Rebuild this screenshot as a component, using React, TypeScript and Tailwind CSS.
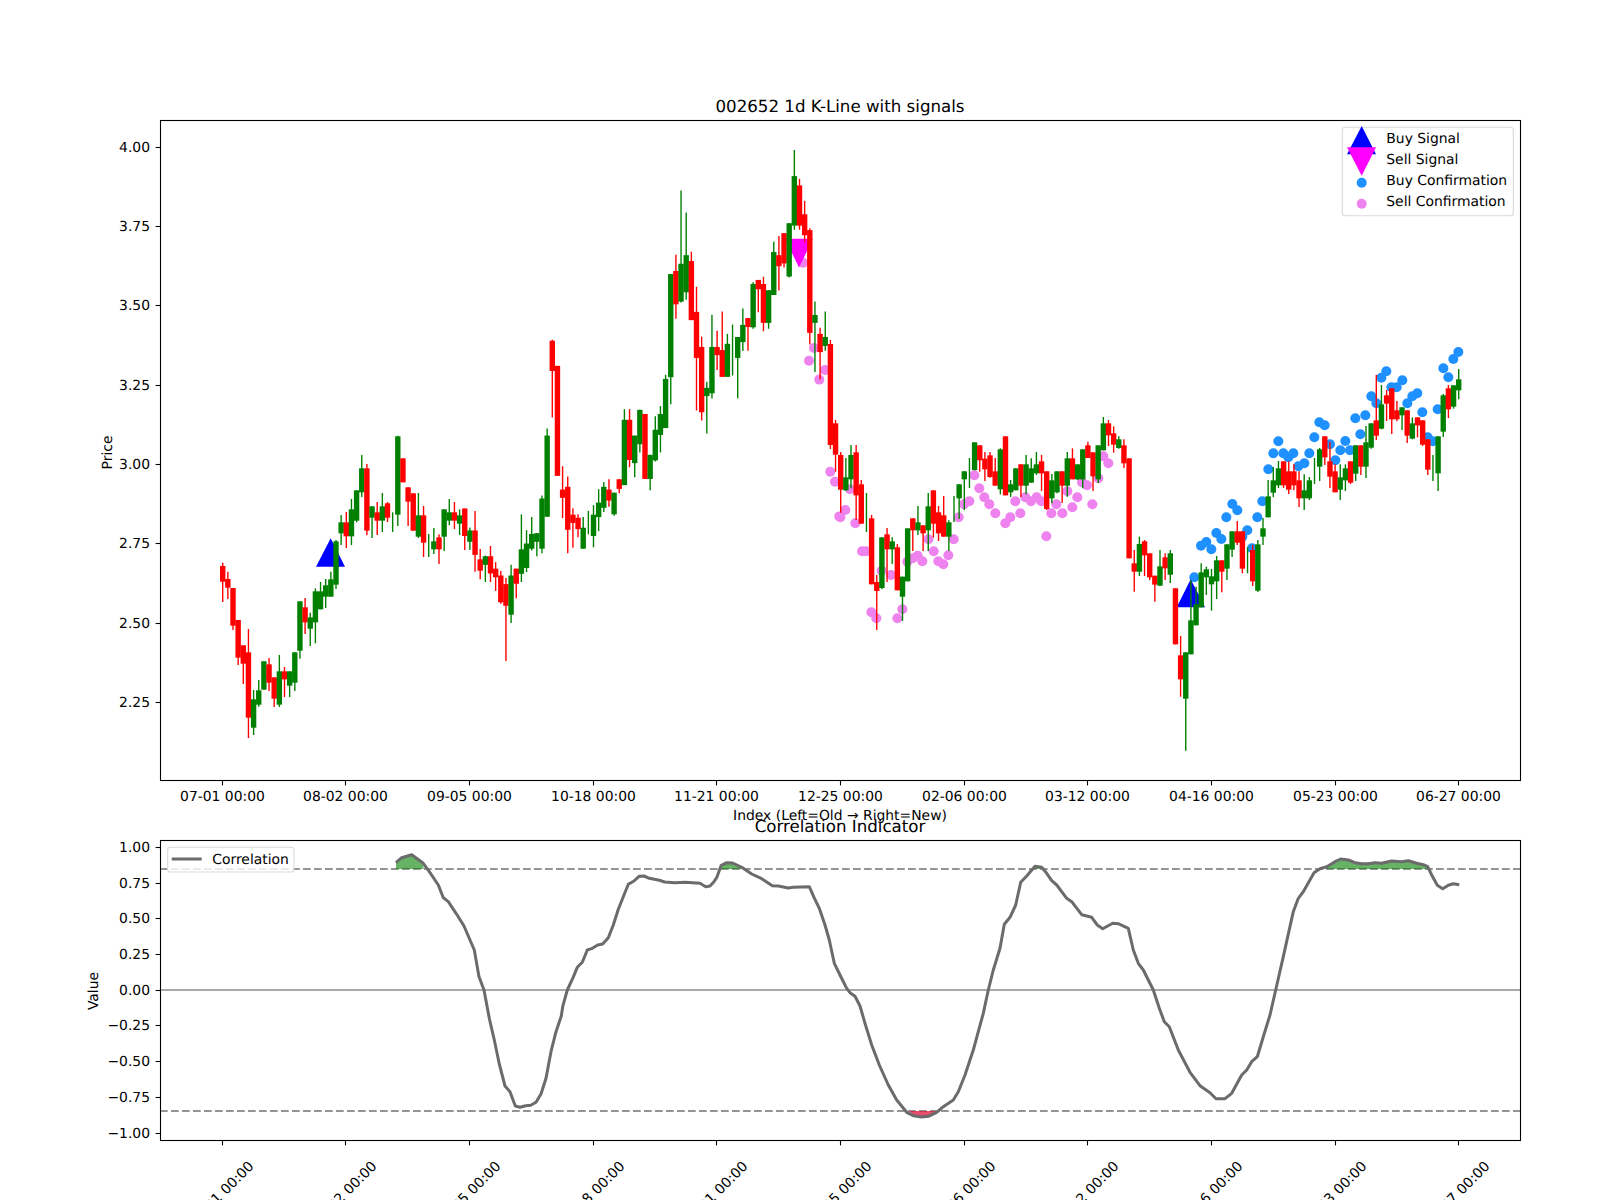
const RED = "#ff0000"
const GREEN = "#008000"

// x of bar i, ticks fall on every 24th bar
const barX = (i: number) => 222.7 + 5.15 * i

type Row = [string, number, number, number, number]

// [colour, body top, body bottom, wick top, wick bottom], measured on the reference
const part1: Row[] = [
  ["r",558,605,548,666],["r",597,623,575,657],["r",624,737,624,750],["r",720,833,720,855],["r",796,851,796,912],
  ["r",817,1013,747,1074],["g",958,1043,930,1065],["g",931,974,900,980],["g",844,929,844,929],["r",853,908,834,933],
  ["r",892,956,892,981],["g",874,974,825,981],["r",874,898,861,951],["g",874,917,874,951],["g",817,908,817,933],
  ["g",664,812,664,836],["r",682,727,654,762],["g",712,746,698,798],["g",634,727,625,790],["g",634,688,606,688],
  ["g",616,650,597,684],["g",598,650,575,650],["g",484,614,480,627],["g",427,460,405,495],["r",427,469,396,504],
  ["g",388,469,357,495],["g",331,422,331,427],["g",265,337,225,351],["r",265,452,252,466],["g",379,413,379,474],
  ["r",397,422,366,465],["g",379,422,339,456],["r",370,413,366,426],["t",0,0,397,456],["g",169,404,167,438],
  ["r",235,307,235,307],["r",322,365,322,438],["r",340,452,340,452],["g",406,470,339,474],["r",406,488,378,531],
  ["t",0,0,462,531],["g",484,508,444,522],["r",472,508,463,552],["g",388,470,388,513],["g",397,422,357,436],
  ["r",397,422,366,447],["g",406,431,388,465],
]

const part2: Row[] = [
  ["r",1043,1123,1043,1164],["g",1107,1140,1098,1164],["r",1107,1178,1050,1227],["r",1191,1224,1161,1249],["g",1182,1207,1180,1257],
  ["r",1182,1232,1152,1257],["r",1218,1243,1199,1283],["r",1238,1316,1225,1320],["r",1263,1326,1245,1487],["g",1238,1352,1207,1376],
  ["r",1218,1262,1218,1304],["g",1162,1233,1060,1257],["g",1145,1216,1106,1228],["g",1117,1160,1068,1165],["g",1115,1140,1115,1182],
  ["g",1014,1160,1005,1173],["g",831,1067,810,1067],["r",555,643,552,778],["r",628,948,628,948],["r",988,1012,920,1071],
  ["r",980,1105,950,1173],["r",1061,1085,1042,1157],["r",1070,1103,1060,1127],["g",1099,1160,1068,1160],["t",0,0,1050,1118],
  ["g",1061,1123,1033,1156],["g",1026,1068,987,1109],["g",980,1041,966,1053],["r",988,1020,958,1038],["g",997,1060,997,1064],
  ["r",958,986,958,999],["g",785,975,754,975],["r",785,902,754,923],["g",831,911,831,952],["g",756,856,756,880],
  ["r",768,957,768,957],["g",887,957,887,990],["g",814,903,775,906],["g",768,829,745,880],["g",666,809,654,809],
  ["g",361,661,361,740],["r",352,449,305,491],["g",331,441,118,444],["g",306,414,182,436],["r",323,495,296,495],
  ["r",471,605,398,758],["r",573,763,543,787],["g",692,716,674,825],["g",573,708,479,723],["r",573,597,526,640],
  ["r",582,660,470,660],["g",564,660,535,660],["t",0,0,508,656],["g",544,605,544,722],["g",509,559,461,585],
  ["r",489,515,489,584],["g",390,516,385,520],["r",378,405,378,472],["r",390,503,369,527],["g",408,503,408,520],
  ["g",297,422,267,422],["r",306,338,250,409],["r",242,330,242,342],["g",213,368,213,371],["g",76,220,0,232],
  ["r",103,220,84,232],["r",187,248,148,268],["r",233,532,228,566],["g",480,503,441,646],["r",535,588,517,668],
  ["g",544,570,470,584],
]

const part3: Row[] = [
  ["r",-108,195,-120,207],["r",130,224,120,275],["r",225,329,216,398],["g",292,331,234,333],["g",225,298,195,325],
  ["r",217,346,195,420],["r",313,431,300,431],["t",0,0,339,456],["r",415,613,405,613],["r",606,633,585,750],
  ["g",472,624,472,628],["r",463,508,444,606],["g",484,508,472,552],["r",502,631,492,631],["g",590,650,590,723],
  ["g",445,604,445,604],["r",415,451,415,513],["g",427,451,378,465],["r",436,460,436,513],["g",379,451,339,513],
  ["r",331,431,331,473],["r",397,460,378,483],["r",406,470,348,470],["g",427,470,421,513],["t",0,0,348,426],
  ["g",313,355,313,417],["g",274,298,274,390],["t",0,0,234,324],["g",187,270,187,272],["r",196,241,196,275],
  ["r",236,268,216,303],["r",226,291,216,293],["r",274,317,234,317],["g",208,328,205,343],["r",169,346,169,346],
  ["g",313,337,300,351],["g",265,331,265,331],["r",253,317,253,351],["g",253,317,225,343],["g",265,308,235,308],
  ["g",253,280,216,285],["r",244,280,225,333],["r",274,387,274,390],["g",301,355,282,370],["g",274,337,274,340],
  ["r",274,317,274,369],["g",235,317,216,350],["r",235,298,205,298],["g",253,298,253,300],["g",208,298,208,325],
  ["r",196,234,185,234],["r",217,289,217,333],["g",196,298,196,309],["g",130,211,111,211],["r",130,166,120,198],
  ["r",160,194,139,218],["g",178,204,169,206],["r",196,250,178,264],["r",235,535,235,535],
]

const part4: Row[] = [
  ["r",670,695,630,755],["g",612,695,590,708],["r",604,646,600,708],["r",640,712,640,720],["r",707,734,707,785],
  ["g",679,737,630,738],["r",652,685,640,720],["g",640,704,630,729],["r",745,913,745,913],["r",946,1018,888,1070],
  ["g",937,1076,937,1232],["g",841,943,720,943],["g",793,856,740,856],["g",697,802,670,802],["g",688,712,680,765],
  ["g",709,733,687,812],["g",661,724,648,777],["r",661,695,661,757],["g",613,686,613,720],["g",574,629,574,651],
  ["r",574,608,543,615],["r",574,686,574,700],["t",0,0,622,700],["r",630,724,615,738],["g",613,752,600,756],
  ["g",565,590,534,615],["g",469,532,420,532],["g",421,458,381,471],["g",385,436,363,444],["r",364,436,364,444],
  ["r",394,449,364,462],["r",394,436,373,451],["r",421,475,394,501],["g",451,475,403,510],["g",421,475,411,480],
  ["t",0,0,354,432],["g",328,380,324,423],["r",289,352,289,375],["r",364,410,305,444],["r",394,457,373,457],
  ["g",412,449,373,480],["g",385,421,373,453],["r",364,428,364,432],["g",316,401,316,423],["r",316,380,316,405],
  ["g",307,380,258,414],["g",250,323,250,326],["r",241,287,105,300],["g",193,266,135,268],["r",166,191,150,243],
  ["r",145,238,145,282],["r",211,238,183,244],["g",202,226,202,270],["r",211,287,211,309],["g",250,296,232,298],
  ["r",232,256,232,292],["r",241,314,241,318],["r",298,389,298,405],["t",0,0,345,423],["g",289,400,289,453],
  ["g",166,275,162,291],["r",145,208,135,234],["g",136,200,136,206],["g",118,151,87,178],
]

const scaleRows = (rows: Row[], y0: number, k: number): Row[] =>
  rows.map(([c, t, b, wt, wb]) => [c, y0 + t * k, y0 + b * k, y0 + wt * k, y0 + wb * k])

const candles: Row[] = [
  ...scaleRows(part1, 380, 1 / 3),
  ...scaleRows(part2, 150, 0.3437),
  ...scaleRows(part3, 380, 1 / 3),
  ...scaleRows(part4, 340, 1 / 3),
]

const sellDots: [number, number][] = [
  [803,262.7],[814,348],[809,360.7],[825,370],[819.3,379.6],[830.3,471.7],[835,481.7],[839.3,516.4],
  ...([
    [60,328],[46,390],[31,412],[76,430],[96,514],[108,514],[155,572],[183,585],[124,697],[139,715],[202,715],[217,688],
    [232,545],[248,535],[263,527],[277,544],[295,478],[311,514],[325,544],[340,553],[355,526],[371,478],[386,412],
    [402,373],[418,364],[433,286],[448,325],[463,352],[478,373],[496,400],[526,430],[541,412],[556,364],[571,400],
    [586,352],[603,364],[620,352],[634,364],[649,469],[664,400],[679,373],[697,400],[712,334],[727,382],[742,352],
    [756,307],[771,316],[787,373],[805,295],[820,229],[835,250],
  ].map(([x, y]) => [830 + x / 3, 380 + y / 3]) as [number, number][]),
]

const buyDots = ([
  [193,712],[213,617],[229,606],[244,628],[259,579],[274,597],[289,532],[307,492],[322,511],[337,590],[352,571],
  [366,625],[382,532],[397,484],[415,388],[430,340],[445,304],[460,340],[475,352],[490,340],[505,379],[523,370],
  [538,340],[553,292],[568,247],[584,256],[600,313],[616,361],[631,331],[646,303],[660,331],[676,235],[691,283],
  [706,226],[724,169],[739,190],[754,113],[769,94],[784,142],[800,142],[817,121],[832,190],[847,169],[862,160],
  [877,217],[893,292],[908,304],[923,208],[940,85],[955,112],[970,57],[985,36],
]).map(([x, y]) => [1130 + x / 3, 340 + y / 3])

const toPage = (pts: number[][], x0: number) => pts.map(([x, y]) => [x0 + x / 3, 770 + y / 3])

const corrLine = [
  ...toPage([[948,278],[965,263],[995,254],[1028,278],[1050,308],[1075,345],[1090,383],[1105,395],[1130,433],[1152,468],[1170,510],[1183,540],[1197,620],[1212,660],[1228,745],[1243,810],[1258,882],[1275,948],[1290,965],[1306,1008],[1320,1012],[1337,1007],[1352,1006],[1368,997],[1383,972],[1398,925],[1413,845],[1428,785],[1444,738]], 80),
  ...toPage([[8,710],[22,660],[38,625],[52,592],[67,577],[82,540],[97,535],[113,525],[128,522],[145,503],[160,465],[175,418],[190,380],[205,343],[222,333],[237,319],[252,318],[268,325],[298,331],[314,336],[345,338],[375,337],[420,340],[437,350],[450,348],[462,335],[470,323],[483,287],[500,278],[518,279],[545,292],[575,312],[605,326],[637,347],[655,348],[685,354],[700,352],[748,350],[762,382],[778,415],[795,465],[808,510],[823,580],[840,615],[860,655],[870,668],[885,679],[900,708],[915,760],[935,825],[958,885],[985,945],[1010,990],[1040,1027],[1060,1037],[1085,1041],[1105,1039],[1130,1027],[1150,1010],[1180,990],[1195,965],[1215,915],[1240,840],[1270,730],[1285,660],[1300,600],[1320,535],[1333,463],[1350,442],[1367,405],[1382,337],[1400,318],[1425,289]], 560),
  ...toPage([[5,292],[20,310],[35,332],[50,345],[80,385],[95,395],[125,434],[155,442],[172,465],[188,476],[218,460],[235,461],[265,475],[280,540],[295,580],[310,600],[340,660],[358,715],[373,755],[388,770],[415,840],[450,907],[480,947],[510,968],[528,986],[555,986],[575,970],[605,915],[620,900],[635,875],[652,860],[670,800],[690,735],[707,660],[730,560],[760,425],[775,385],[790,365],[822,308],[840,296],[860,290],[885,275],[902,267],[925,270],[945,278],[965,281],[985,281],[1005,278],[1025,280],[1055,273],[1085,275],[1105,272],[1130,280],[1150,284],[1163,290],[1175,315],[1192,346],[1208,356],[1225,346],[1240,341],[1258,344]], 1040),
]

const greenFills = [
  toPage([[948,297],[948,278],[965,263],[995,254],[1028,278],[1031,297]], 80),
  toPage([[483,297],[483,287],[500,278],[518,279],[545,292],[553,297]], 560),
  toPage([[1412,297],[1425,289],[1445,293],[1449,297]], 560),
  toPage([[858,297],[860,290],[885,275],[902,267],[925,270],[945,278],[965,281],[985,281],[1005,278],[1025,280],[1055,273],[1085,275],[1105,272],[1130,280],[1150,284],[1163,290],[1166,297]], 1040),
]
const redFill = toPage([[1047,1023],[1060,1037],[1085,1041],[1105,1039],[1130,1027],[1135,1023]], 560)

const pts = (list: number[][]) => list.map(([x, y]) => `${x.toFixed(1)},${y.toFixed(1)}`).join(" ")

const tickXs = [222.5, 345.5, 469.5, 593.5, 716.5, 840.5, 964.5, 1087.5, 1211.5, 1335.5, 1458.5]
const tickDates = ["07-01", "08-02", "09-05", "10-18", "11-21", "12-25", "02-06", "03-12", "04-16", "05-23", "06-27"]
const priceTicks: [string, number][] = [["4.00",147.5],["3.75",226.5],["3.50",305.5],["3.25",385.5],["3.00",464.5],["2.75",543.5],["2.50",623.5],["2.25",702.5]]
const valueTicks: [string, number][] = [["1.00",847.5],["0.75",883.5],["0.50",918.5],["0.25",954.5],["0.00",990.5],["−0.25",1025.5],["−0.50",1061.5],["−0.75",1097.5],["−1.00",1133.5]]

function YTicks({ ticks }: { ticks: [string, number][] }) {
  return (
    <>
      {ticks.map(([label, y]) => (
        <g key={label}>
          <line x1={155.6} x2={160.5} y1={y} y2={y} stroke="#000" strokeWidth={1.1} />
          <text x={150} y={y + 4.3} textAnchor="end" fontSize={13.9}>{label}</text>
        </g>
      ))}
    </>
  )
}

export default function App() {
  return (
    <div className="w-[1600px] h-[1200px] bg-white overflow-hidden">
      <svg width={1600} height={1200} viewBox="0 0 1600 1200" textRendering="geometricPrecision" className="block font-['DejaVu_Sans',sans-serif]">
        <text x={840} y={111.7} textAnchor="middle" fontSize={16.67}>002652 1d K-Line with signals</text>

        {/* markers sit under the candles */}
        {sellDots.map(([x, y], i) => <circle key={i} cx={x} cy={y} r={5} fill="#ee82ee" />)}
        {buyDots.map(([x, y], i) => <circle key={i} cx={x} cy={y} r={5} fill="#1e90ff" />)}
        <polygon points="330.7,538.3 316,566.7 345,566.7" fill="#0000ff" />
        <polygon points="1190.7,579.3 1176.7,607.3 1205,607.3" fill="#0000ff" />
        <polygon points="785,238.7 813,238.7 799,267.5" fill="#ff00ff" />

        {candles.map(([c, top, bottom, wickTop, wickBottom], i) => {
          const color = c === "r" ? RED : GREEN
          const x = barX(i)
          return (
            <g key={i}>
              <line x1={x} x2={x} y1={wickTop} y2={wickBottom} stroke={color} strokeWidth={1.39} />
              {c !== "t" && <rect x={x - 2.7} y={top} width={5.4} height={bottom - top} fill={color} />}
            </g>
          )
        })}

        <rect x={160.5} y={120.5} width={1360} height={660} fill="none" stroke="#000" strokeWidth={1.1} />
        <YTicks ticks={priceTicks} />
        {tickXs.map((x, i) => (
          <g key={x}>
            <line x1={x} x2={x} y1={780.5} y2={785.4} stroke="#000" strokeWidth={1.1} />
            <text x={x} y={801} textAnchor="middle" fontSize={13.9}>{tickDates[i]} 00:00</text>
          </g>
        ))}
        <text transform="translate(111.5 452.5) rotate(-90)" textAnchor="middle" fontSize={13.9}>Price</text>
        <text x={840} y={820} textAnchor="middle" fontSize={13.9}>Index (Left=Old → Right=New)</text>

        {/* legend, price panel */}
        <rect x={1342.3} y={127.3} width={171} height={88.4} rx={2.8} fill="#fff" fillOpacity={0.8} stroke="#d9d9d9" strokeWidth={1.1} />
        <polygon points="1361.7,126 1347,154.3 1376,154.3" fill="#0000ff" />
        <polygon points="1347,147.3 1376,147.3 1361.7,175.7" fill="#ff00ff" />
        <circle cx={1361.7} cy={182.7} r={5} fill="#1e90ff" />
        <circle cx={1361.7} cy={203.7} r={5} fill="#ee82ee" />
        <text x={1386.3} y={143.3} fontSize={13.9}>Buy Signal</text>
        <text x={1386.3} y={164.3} fontSize={13.9}>Sell Signal</text>
        <text x={1386.3} y={185.3} fontSize={13.9}>Buy Confirmation</text>
        <text x={1386.3} y={206.3} fontSize={13.9}>Sell Confirmation</text>

        <text x={840} y={831.7} textAnchor="middle" fontSize={16.67}>Correlation Indicator</text>

        {/* correlation panel */}
        <line x1={160} x2={1520} y1={990} y2={990} stroke="#a9a9a9" strokeWidth={2} />
        <line x1={160} x2={1520} y1={869} y2={869} stroke="#949494" strokeWidth={2.1} strokeDasharray="7.7 3.3" />
        <line x1={160} x2={1520} y1={1111} y2={1111} stroke="#949494" strokeWidth={2.1} strokeDasharray="7.7 3.3" />
        {greenFills.map((f, i) => <polygon key={i} points={pts(f)} fill="#008000" fillOpacity={0.6} />)}
        <polygon points={pts(redFill)} fill="#dc143c" fillOpacity={0.75} />
        <polyline points={pts(corrLine)} fill="none" stroke="#6b6b6b" strokeWidth={3} strokeLinejoin="round" />

        <rect x={160.5} y={840.5} width={1360} height={300} fill="none" stroke="#000" strokeWidth={1.1} />
        <YTicks ticks={valueTicks} />
        {tickXs.map((x, i) => (
          <g key={x}>
            <line x1={x} x2={x} y1={1140.5} y2={1145.4} stroke="#000" strokeWidth={1.1} />
            <text transform={`translate(${x - 1.5} 1193.5) rotate(-45)`} y={5} textAnchor="middle" fontSize={13.9}>{tickDates[i]} 00:00</text>
          </g>
        ))}
        <text transform="translate(98 991) rotate(-90)" textAnchor="middle" fontSize={13.9}>Value</text>

        {/* legend, correlation panel */}
        <rect x={167.7} y={847.3} width={126.3} height={24.7} rx={2.8} fill="#fff" fillOpacity={0.8} stroke="#d9d9d9" strokeWidth={1.1} />
        <line x1={171.7} x2={201.7} y1={859} y2={859} stroke="#6b6b6b" strokeWidth={3} />
        <text x={212.3} y={864.3} fontSize={13.9}>Correlation</text>
      </svg>
    </div>
  )
}
